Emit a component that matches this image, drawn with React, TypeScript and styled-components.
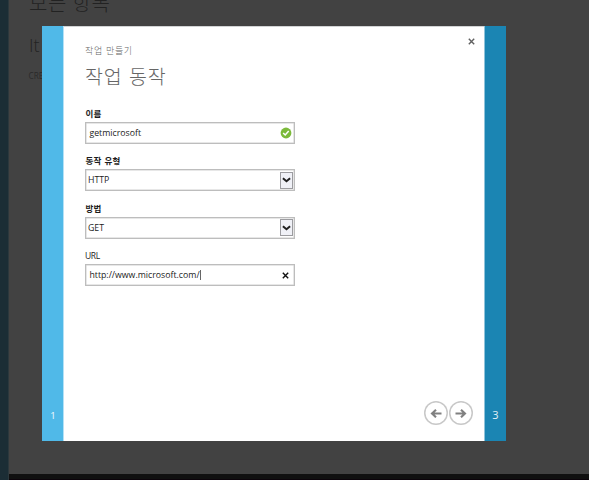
import React from "react";
import styled, { createGlobalStyle } from "styled-components";

const GlobalStyle = createGlobalStyle`
  * { box-sizing: border-box; }
  html, body { margin: 0; padding: 0; overflow: hidden; }
  body { font-family: "Open Sans", "Noto Sans CJK KR", sans-serif; }
`;

const Page = styled.div`
  position: relative;
  display: grid;
  grid-template-columns: 9px 1fr;
  grid-template-rows: 474px 6px;
  width: 589px;
  height: 480px;
  overflow: hidden;
  background: #424242;
`;

const NavStrip = styled.div`
  grid-row: 1 / 3;
  background: #1b2d35;
  border-right: 1px solid #2c383d;
`;

const Backdrop = styled.div`
  display: flex;
  flex-direction: column;
  padding-left: 20px;
  color: #222;
  white-space: nowrap;
`;

const BackTitle = styled.div`
  margin-top: -11px;
  height: 28px;
  line-height: 28px;
  font-family: "Noto Sans CJK KR", sans-serif;
  font-weight: 300;
  font-size: 20px;
  letter-spacing: 0.5px;
  word-spacing: 0.8px;
`;

const BackItem = styled.div`
  margin: 17px 0 0;
  height: 22px;
  line-height: 22px;
  font-size: 18px;
  font-weight: 300;
`;

const BackColumn = styled.div`
  margin: 14px 0 0 -0.5px;
  height: 12px;
  line-height: 12px;
  font-size: 8.2px;
  color: #2a2a2a;
`;

const Footer = styled.div`
  background: linear-gradient(#101010 0 5px, #0c040b 5px);
`;

const Dialog = styled.div`
  position: absolute;
  left: 42px;
  top: 26px;
  display: flex;
  width: 464px;
  height: 415px;
  background: #fff;
  border-top: 1px solid #d2d4d5;
`;

const Step = styled.div<{ $next?: boolean }>`
  display: flex;
  flex: none;
  align-items: flex-end;
  justify-content: center;
  width: 22px;
  margin-top: -1px;
  padding-bottom: ${(p) => (p.$next ? 19 : 18)}px;
  padding-left: ${(p) => (p.$next ? 0 : 1)}px;
  background: ${(p) => (p.$next ? "#1b85b3" : "#50b9e8")};
  border-left: ${(p) => (p.$next ? "1px solid #8fc3da" : "0")};
  border-right: ${(p) => (p.$next ? "0" : "1px solid #b4e1f6")};
  color: ${(p) => (p.$next ? "#e3f1f7" : "#f4fcff")};
  font-size: ${(p) => (p.$next ? 11 : 9.5)}px;
  line-height: 14px;
`;

const Content = styled.div`
  display: flex;
  flex: 1;
  flex-direction: column;
  padding: 10px 9px 16px 21px;
`;

const Header = styled.div`
  display: flex;
  justify-content: space-between;
  height: 50px;
`;

const Titles = styled.div`
  display: flex;
  flex-direction: column;
  padding-top: 7px;
  font-family: "Noto Sans CJK KR", sans-serif;
  font-weight: 300;
  color: #666;
`;

const Subtitle = styled.div`
  font-size: 9px;
  line-height: 14px;
  letter-spacing: 0.65px;
  word-spacing: 0.5px;
`;

const Title = styled.div`
  margin-top: 4px;
  font-size: 19.5px;
  line-height: 28px;
  letter-spacing: 0.8px;
  word-spacing: 1.5px;
  color: #666;
`;

const CloseButton = styled.button`
  display: flex;
  width: 7px;
  height: 7px;
  margin-top: 1px;
  padding: 0;
  border: 0;
  background: none;
`;

const Form = styled.div`
  display: flex;
  flex-direction: column;
  flex: 1;
  width: 210px;
  padding-top: 20px;
`;

const Field = styled.div`
  display: flex;
  flex-direction: column;
  height: 47.4px;
`;

const Label = styled.label<{ $plain?: boolean }>`
  height: 15px;
  padding-left: ${(p) => (p.$plain ? 0 : 0.5)}px;
  line-height: 14px;
  font-size: 8.5px;
  font-weight: ${(p) => (p.$plain ? 400 : 700)};
  letter-spacing: ${(p) => (p.$plain ? -0.4 : 0.2)}px;
  word-spacing: 0.5px;
  color: #1c1c1c;
`;

const Control = styled.div<{ $select?: boolean }>`
  display: flex;
  align-items: center;
  justify-content: space-between;
  height: 22px;
  padding: 0 ${(p) => (p.$select ? 1 : 2)}px 0 ${(p) => (p.$select ? 2 : 3.4)}px;
  border: 1.5px solid #bdbdbd;
  background: #fff;
  color: #222;
  font-size: 8.75px;
  line-height: 16px;
  box-shadow: inset 0 0 0 0.5px #d0d0d0;
`;

const Value = styled.span<{ $width: number }>`
  display: flex;
  align-items: center;
  width: ${(p) => p.$width}px;
  white-space: nowrap;
`;

const Caret = styled.i`
  flex: none;
  width: 1px;
  height: 10px;
  background: #666;
`;

const SelectButton = styled.span`
  display: flex;
  align-items: center;
  justify-content: center;
  width: 13px;
  height: 17px;
  border: 1px solid #9c9ca0;
  background: #f0f1f7;
`;

const Clear = styled.span`
  display: flex;
  width: 13px;
  justify-content: center;
`;

const Actions = styled.div`
  display: flex;
  justify-content: flex-end;
  gap: 1px;
  padding-right: 2px;
`;

const RoundButton = styled.button`
  display: flex;
  align-items: center;
  justify-content: center;
  width: 24px;
  height: 24px;
  padding: 0;
  border: 0;
  border-radius: 50%;
  background: #fff;
  box-shadow: inset 0 0 0 1.5px #c8c8c8;
`;

const Cross = ({ size, color }: { size: number; color: string }) => (
  <svg width={size} height={size} viewBox="0 0 7 7">
    <path d="M.8.8 6.2 6.2M6.2.8.8 6.2" stroke={color} strokeWidth="1.4" />
  </svg>
);

const Arrow = ({ back }: { back?: boolean }) => (
  <svg width="12" height="10" viewBox="0 0 12 10">
    <path
      d={back ? "M11.5 5.5H1.8M6 1.7 2 5.5l4 3.8" : "M.5 5.5h9.7M6 1.7l4 3.8-4 3.8"}
      fill="none"
      stroke="#808080"
      strokeWidth="2.1"
    />
  </svg>
);

const Chevron = () => (
  <svg width="9" height="6" viewBox="0 0 9 6">
    <path d="M.9 1.2 4.5 4.2 8.1 1.2" fill="none" stroke="#202020" strokeWidth="2" />
  </svg>
);

const Check = () => (
  <svg width="12" height="12" viewBox="0 0 12 12">
    <circle cx="6" cy="6" r="5.4" fill="#7cba3b" />
    <path d="m3.2 6 2 2 3.5-4" fill="none" stroke="#fff" strokeWidth="1.5" />
  </svg>
);

export default function App() {
  return (
    <>
      <GlobalStyle />
      <Page>
        <NavStrip />
        <Backdrop>
          <BackTitle>모든 항목</BackTitle>
          <BackItem>It</BackItem>
          <BackColumn>CRE</BackColumn>
        </Backdrop>
        <Footer />
        <Dialog role="dialog">
          <Step>1</Step>
          <Content>
            <Header>
              <Titles>
                <Subtitle>작업 만들기</Subtitle>
                <Title>작업 동작</Title>
              </Titles>
              <CloseButton aria-label="닫기"><Cross size={7} color="#606060" /></CloseButton>
            </Header>
            <Form>
              <Field>
                <Label>이름</Label>
                <Control><Value $width={60}>getmicrosoft</Value><Check /></Control>
              </Field>
              <Field>
                <Label>동작 유형</Label>
                <Control $select><Value $width={60}>HTTP</Value><SelectButton><Chevron /></SelectButton></Control>
              </Field>
              <Field>
                <Label>방법</Label>
                <Control $select><Value $width={60}>GET</Value><SelectButton><Chevron /></SelectButton></Control>
              </Field>
              <Field>
                <Label $plain>URL</Label>
                <Control><Value $width={130}>http://www.microsoft.com/<Caret /></Value><Clear><Cross size={7} color="#111" /></Clear></Control>
              </Field>
            </Form>
            <Actions>
              <RoundButton aria-label="이전"><Arrow back /></RoundButton>
              <RoundButton aria-label="다음"><Arrow /></RoundButton>
            </Actions>
          </Content>
          <Step $next>3</Step>
        </Dialog>
      </Page>
    </>
  );
}
